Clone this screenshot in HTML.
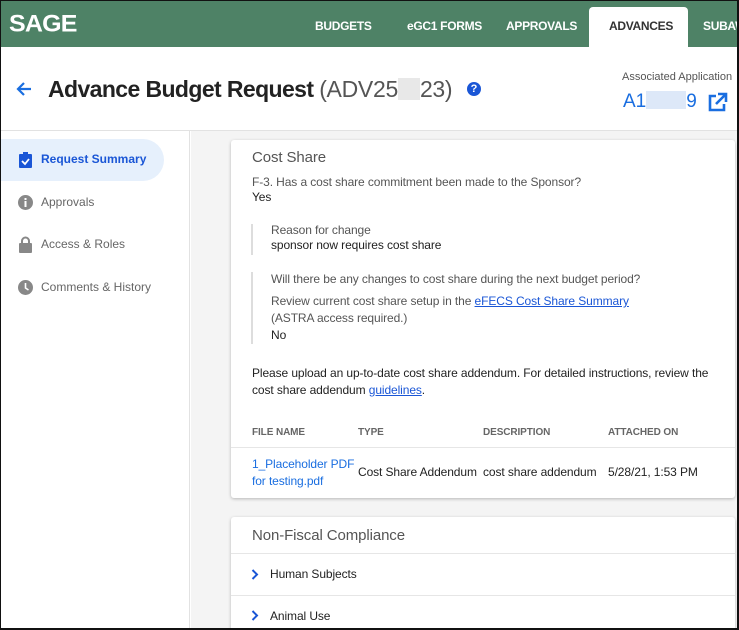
<!DOCTYPE html>
<html><head><style>
*{box-sizing:border-box;margin:0;padding:0}
html,body{width:739px;height:630px;overflow:hidden}
body{font-family:"Liberation Sans",sans-serif;background:#fff;position:relative}
#w{position:absolute;left:0;top:0;width:739px;height:630px;overflow:hidden}
.abs{position:absolute;white-space:nowrap}
.hdr{position:absolute;left:0;top:0;width:739px;height:47px;background:#4e8266}
.nav{position:absolute;top:19px;color:#fff;font-size:12px;font-weight:bold;letter-spacing:-0.3px}
.side{position:absolute;left:0;top:131px;width:190px;height:499px;background:#fff;border-right:1px solid #e2e2e2}
.main{position:absolute;left:191px;top:131px;width:548px;height:499px;background:#f4f4f4}
.card{position:absolute;background:#fff;box-shadow:0 1px 3px rgba(0,0,0,.25);border-radius:3px}
.t{position:absolute;font-size:12px;color:#222;white-space:nowrap;letter-spacing:-0.1px}
.g{color:#555}
.si{position:absolute;left:41px;font-size:12px;color:#666}
a{color:#1a56d6}
</style></head><body><div id="w">
<div class="hdr"></div>
<div class="abs" style="left:9px;top:10px;font-size:25px;font-weight:900;color:#fff;letter-spacing:-0.8px;transform:scaleY(0.95)">SAGE</div>
<div class="nav" style="left:315px">BUDGETS</div>
<div class="nav" style="left:407px">eGC1 FORMS</div>
<div class="nav" style="left:506px">APPROVALS</div>
<div class="abs" style="left:589px;top:7px;width:99px;height:41px;background:#fff;border-radius:4px 4px 0 0"></div>
<div class="nav" style="left:609px;color:#333">ADVANCES</div>
<div class="nav" style="left:703px">SUBAWARDS</div>

<svg class="abs" style="left:15px;top:81px" width="18" height="16" viewBox="0 0 18 16"><path d="M16 8H3M9 2L3 8l6 6" stroke="#1a6ee0" stroke-width="2.2" fill="none"/></svg>
<div class="abs" style="left:48px;top:76px;font-size:23px;font-weight:bold;color:#222;letter-spacing:-0.6px">Advance Budget Request <span style="font-weight:normal;color:#555;letter-spacing:-0.3px">(ADV25<span style="display:inline-block;width:22px;height:22px;background:#e8e8e8;vertical-align:-3px"></span>23)</span></div>
<div class="abs" style="left:467px;top:82px;width:14px;height:14px;border-radius:50%;background:#1a56d6;color:#fff;font-size:11px;font-weight:bold;text-align:center;line-height:14px">?</div>
<div class="abs" style="left:622px;top:71px;font-size:11px;color:#555">Associated Application</div>
<div class="abs" style="left:623px;top:91px;font-size:19px;color:#1a6ee0">A1<span style="display:inline-block;width:40px;height:18px;background:#dde8f8;vertical-align:-2px"></span>9</div>
<svg class="abs" style="left:707px;top:92px" width="21" height="20" viewBox="0 0 21 20"><path d="M9 4H3v14h14v-6" stroke="#1a6ee0" stroke-width="2.6" fill="none"/><path d="M11 2h8v8M19 2L9 12" stroke="#1a6ee0" stroke-width="2.6" fill="none"/></svg>
<div class="abs" style="left:0;top:130px;width:739px;height:1px;background:#e2e2e2"></div>

<div class="side"></div>
<div class="abs" style="left:0;top:139px;width:164px;height:42px;background:#e6f0fc;border-radius:0 21px 21px 0"></div>
<svg class="abs" style="left:19px;top:152px" width="13" height="16" viewBox="0 0 13 16"><rect x="0" y="2" width="13" height="14" rx="1" fill="#1a56d6"/><rect x="4" y="0" width="5" height="4" fill="#1a56d6"/><path d="M3 9l3 3 4-5" stroke="#fff" stroke-width="1.8" fill="none"/></svg>
<div class="si" style="top:152px;color:#1a56d6;font-weight:bold">Request Summary</div>
<svg class="abs" style="left:18px;top:195px" width="15" height="15"><circle cx="7.5" cy="7.5" r="7.5" fill="#888"/><rect x="6.5" y="6" width="2" height="6" fill="#fff"/><rect x="6.5" y="3" width="2" height="2" fill="#fff"/></svg>
<div class="si" style="top:195px">Approvals</div>
<svg class="abs" style="left:18px;top:236px" width="15" height="17"><path d="M4 8V5a3.5 3.5 0 017 0v3" stroke="#888" stroke-width="2" fill="none"/><rect x="1" y="7" width="13" height="10" rx="1" fill="#888"/></svg>
<div class="si" style="top:237px">Access &amp; Roles</div>
<svg class="abs" style="left:18px;top:280px" width="15" height="15"><circle cx="7.5" cy="7.5" r="7.5" fill="#888"/><path d="M7.5 3v5l3 2" stroke="#fff" stroke-width="1.6" fill="none"/></svg>
<div class="si" style="top:280px">Comments &amp; History</div>

<div class="main"></div>
<div class="card" style="left:231px;top:140px;width:504px;height:358px"></div>
<div class="t g" style="left:252px;top:149px;font-size:15px">Cost Share</div>
<div class="t g" style="left:252px;top:175px">F-3. Has a cost share commitment been made to the Sponsor?</div>
<div class="t" style="left:252px;top:190px">Yes</div>
<div class="abs" style="left:251px;top:224px;width:2px;height:31px;background:#ddd"></div>
<div class="t g" style="left:271px;top:223px">Reason for change</div>
<div class="t" style="left:271px;top:238px">sponsor now requires cost share</div>
<div class="abs" style="left:251px;top:272px;width:2px;height:72px;background:#ddd"></div>
<div class="t g" style="left:271px;top:272px">Will there be any changes to cost share during the next budget period?</div>
<div class="t g" style="left:271px;top:294px">Review current cost share setup in the <a href="#">eFECS Cost Share Summary</a></div>
<div class="t g" style="left:271px;top:311px">(ASTRA access required.)</div>
<div class="t" style="left:271px;top:328px">No</div>
<div class="t" style="left:252px;top:366px">Please upload an up-to-date cost share addendum. For detailed instructions, review the</div>
<div class="t" style="left:252px;top:383px">cost share addendum <a href="#">guidelines</a>.</div>
<div class="t g" style="left:252px;top:427px;font-size:10px;font-weight:bold;color:#666">FILE NAME</div>
<div class="t g" style="left:358px;top:427px;font-size:10px;font-weight:bold;color:#666">TYPE</div>
<div class="t g" style="left:483px;top:427px;font-size:10px;font-weight:bold;color:#666">DESCRIPTION</div>
<div class="t g" style="left:608px;top:427px;font-size:10px;font-weight:bold;color:#666">ATTACHED ON</div>
<div class="abs" style="left:231px;top:447px;width:504px;height:1px;background:#e6e6e6"></div>
<div class="t" style="left:252px;top:457px;color:#1a6ee0">1_Placeholder PDF</div>
<div class="t" style="left:252px;top:474px;color:#1a6ee0">for testing.pdf</div>
<div class="t" style="left:358px;top:465px">Cost Share Addendum</div>
<div class="t" style="left:483px;top:465px">cost share addendum</div>
<div class="t" style="left:608px;top:465px">5/28/21, 1:53 PM</div>

<div class="card" style="left:231px;top:517px;width:504px;height:113px;border-radius:3px 3px 0 0"></div>
<div class="t g" style="left:252px;top:527px;font-size:15px">Non-Fiscal Compliance</div>
<div class="abs" style="left:231px;top:553px;width:504px;height:1px;background:#e6e6e6"></div>
<svg class="abs" style="left:251px;top:569px" width="8" height="11"><path d="M1.5 1l4.5 4.5L1.5 10" stroke="#1a56d6" stroke-width="2" fill="none"/></svg>
<div class="t" style="left:270px;top:567px">Human Subjects</div>
<div class="abs" style="left:231px;top:595px;width:504px;height:1px;background:#e6e6e6"></div>
<svg class="abs" style="left:251px;top:610px" width="8" height="11"><path d="M1.5 1l4.5 4.5L1.5 10" stroke="#1a56d6" stroke-width="2" fill="none"/></svg>
<div class="t" style="left:270px;top:609px">Animal Use</div>

<div class="abs" style="left:0;top:0;width:739px;height:630px;border:1px solid #111;border-right-width:2px;border-bottom-width:2px"></div>
</div></body></html>
